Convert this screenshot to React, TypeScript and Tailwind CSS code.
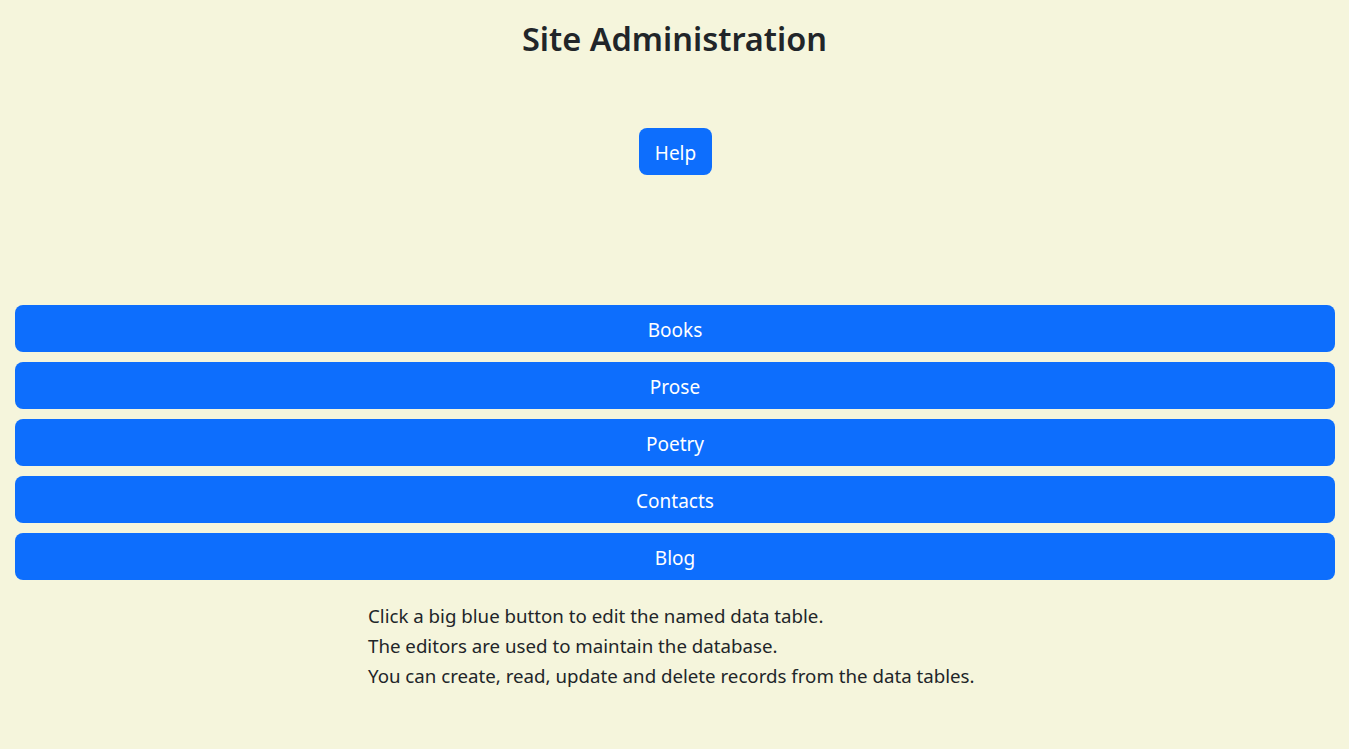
const tables = ['Books', 'Prose', 'Poetry', 'Contacts', 'Blog']

const App = () => {
  return (
    <div className="min-h-[749px] bg-[#f5f5dc] text-[#212529] font-['Noto_Sans',sans-serif]">
      <h1 className="pt-[20px] text-center text-[32.5px] leading-[38px] font-semibold">
        Site Administration
      </h1>

      <div className="flex justify-center mt-[70px] pl-[2px]">
        <button className="h-[47px] px-[16px] pt-[3px] rounded-lg bg-[#0d6efd] text-white text-[19px]">Help</button>
      </div>

      <div className="mt-[130px] pl-[15px] pr-[14px] flex flex-col gap-[10px]">
        {tables.map(name => (
          <button key={name} className="h-[47px] w-full pt-[3px] rounded-lg bg-[#0d6efd] text-white text-[19px]">
            {name}
          </button>
        ))}
      </div>

      <div className="mt-[21px] ml-[368px] text-[18.7px] leading-[30px]">
        <p>Click a big blue button to edit the named data table.</p>
        <p>The editors are used to maintain the database.</p>
        <p>You can create, read, update and delete records from the data tables.</p>
      </div>
    </div>
  )
}

export default App
